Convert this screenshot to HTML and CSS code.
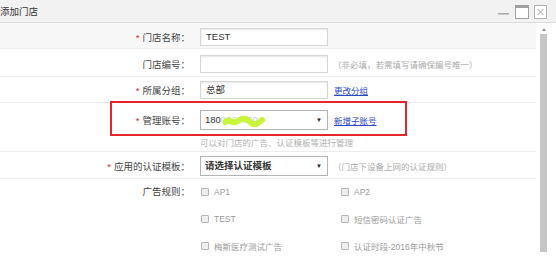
FILE: index.html
```html
<!DOCTYPE html>
<html>
<head lang="zh">
    <meta charset="UTF-8">
    <title>添加门店</title>
    <link rel="stylesheet" href="styles.css">
</head>
<body>
<div class="win">
    <!-- 标题栏 -->
    <div class="titlebar">
        <span class="title">添加门店</span>
        <div class="ctrls">
            <svg width="12" height="14" viewBox="0 0 12 14"><rect x="0" y="8" width="11" height="1.5" fill="#a8a8a8"/></svg>
            <svg width="14" height="14" viewBox="0 0 14 14"><rect x="0.5" y="0.5" width="13" height="13" fill="#fff" stroke="#a0a0a0"/><rect x="1" y="1" width="12" height="2" fill="#a0a0a0"/></svg>
            <svg width="13" height="14" viewBox="0 0 13 14"><rect x="0.5" y="0.5" width="12" height="13" fill="#fff" stroke="#b0b0b0"/><path d="M3.5 4 L9.5 10 M9.5 4 L3.5 10" stroke="#a0a0a0" stroke-width="1"/></svg>
        </div>
    </div>
    <div class="body">
        <div class="form">
            <div class="row hover">
                <div class="lbl"><i>*</i>门店名称：</div>
                <div class="fld"><div class="ipt">TEST</div></div>
            </div>
            <div class="row r2">
                <div class="lbl">门店编号：</div>
                <div class="fld"><div class="ipt"></div><span class="hint">（非必填，若需填写请确保编号唯一）</span></div>
            </div>
            <div class="row r3">
                <div class="lbl"><i>*</i>所属分组：</div>
                <div class="fld"><div class="ipt">总部</div><a class="lnk">更改分组</a></div>
            </div>
            <div class="row r4">
                <div class="mark"></div>
                <div class="line">
                    <div class="lbl"><i>*</i>管理账号：</div>
                    <div class="fld">
                        <div class="sel"><span class="acc">180<span class="blur">0000000</span></span>
                            <svg class="green" width="42" height="12" viewBox="0 0 42 12"><path d="M2 7 C6 3, 10 10, 15 6 S23 3, 27 7 S35 9, 39 5" stroke="#c8f53a" stroke-width="6" fill="none" stroke-linecap="round"/></svg>
                            <b class="arr">▼</b></div>
                        <a class="lnk">新增子账号</a>
                    </div>
                </div>
                <div class="help">可以对门店的广告、认证模板等进行管理</div>
            </div>
            <div class="row r5">
                <div class="lbl"><i>*</i>应用的认证模板：</div>
                <div class="fld"><div class="sel dark">请选择认证模板<b class="arr">▼</b></div><span class="hint">（门店下设备上网的认证规则）</span></div>
            </div>
            <div class="row ads">
                <div class="lbl">广告规则：</div>
                <div class="checks">
                    <label><span class="cb"></span>AP1</label>
                    <label><span class="cb"></span>AP2</label>
                    <label><span class="cb"></span>TEST</label>
                    <label><span class="cb"></span>短信密码认证广告</label>
                    <label><span class="cb"></span>梅斯医疗测试广告</label>
                    <label><span class="cb"></span>认证时段-2016年中秋节</label>
                </div>
            </div>
        </div>
        <!-- 滚动条 -->
        <div class="scroll"><span class="up"></span><div class="thumb"></div></div>
    </div>
</div>
</body>
</html>
```

FILE: styles.css
```css
*{ margin:0; padding:0; box-sizing:border-box; }
body{ width:556px; height:269px; overflow:hidden; background:#fff; font-family:"Liberation Sans","Noto Sans CJK SC",sans-serif; font-size:9.5px; color:#444; }
.win{ width:556px; height:269px; display:flex; flex-direction:column; }
.titlebar{ height:23px; background:#f2f2f2; border-bottom:1px solid #dcdcdc; display:flex; align-items:center; justify-content:space-between; padding-right:9px; }
.title{ margin-left:0; font-size:9.5px; color:#333; }
.ctrls{ display:flex; gap:5px; align-items:center; padding-top:1px; }
.body{ flex:1; display:flex; }
.form{ width:536px; flex:none; }
.scroll{ width:7px; flex:none; margin-left:4px; display:flex; flex-direction:column; align-items:center; padding-top:5px; }
.up{ width:0; height:0; border-left:2px solid transparent; border-right:2px solid transparent; border-bottom:3px solid #999; }
.thumb{ width:7px; height:218px; margin-top:3px; background:#c6c6c6; }
.row{ display:flex; align-items:center; border-bottom:1px solid #ececec; }
.hover{ background:#f7f7f7; height:26px; padding-top:3px; }
.r2{ height:28px; padding-top:3px; }
.r3{ height:26px; padding-top:1px; }
.lbl{ width:190px; text-align:right; padding-right:0; color:#444; white-space:nowrap; }
.lbl i{ font-style:normal; color:#e02a2a; margin-right:3px; }
.fld{ display:flex; align-items:center; margin-left:10px; }
.ipt{ width:128px; height:18px; border:1px solid #d6d6d6; background:#fff; box-shadow:inset 0 1px 2px #e6e6e6; padding:0 5px; line-height:16px; color:#333; }
.hint{ margin-left:5px; font-size:8.5px; color:#aaa; }
.lnk{ margin-left:6px; font-size:8.5px; color:#2a46c8; text-decoration:underline; }
.r4{ display:block; height:49px; position:relative; }
.r4 .line{ display:flex; align-items:center; padding-top:4px; height:30px; }
.mark{ position:absolute; left:110px; top:-2px; width:297px; height:35px; border:2px solid #e6262b; }
.sel{ position:relative; width:128px; height:20px; border:1px solid #b4b4b4; background:#fff; padding:0 4px; line-height:18px; color:#333; display:flex; }
.acc{ color:#333; }
.blur{ color:#d0d0d0; }
.green{ position:absolute; left:22px; top:4px; }
.arr{ position:absolute; right:5px; top:0; font-size:6px; color:#222; font-weight:normal; }
.dark{ font-weight:bold; color:#333; }
.help{ margin-left:200px; margin-top:3px; font-size:8.5px; color:#b0b0b0; }
.r5{ height:27px; padding-top:1px; }
.ads{ border-bottom:0; align-items:flex-start; padding-top:7px; }
.ads .lbl{ line-height:10px; padding-top:1px; }
.checks{ margin-left:11px; display:grid; grid-template-columns:140px 140px; row-gap:15px; }
.checks label{ display:flex; align-items:center; font-size:8.5px; color:#999; height:12px; }
.cb{ width:8px; height:8px; border:1px solid #b5b5b5; background:#eee; margin-right:5px; border-radius:1px; }
```
